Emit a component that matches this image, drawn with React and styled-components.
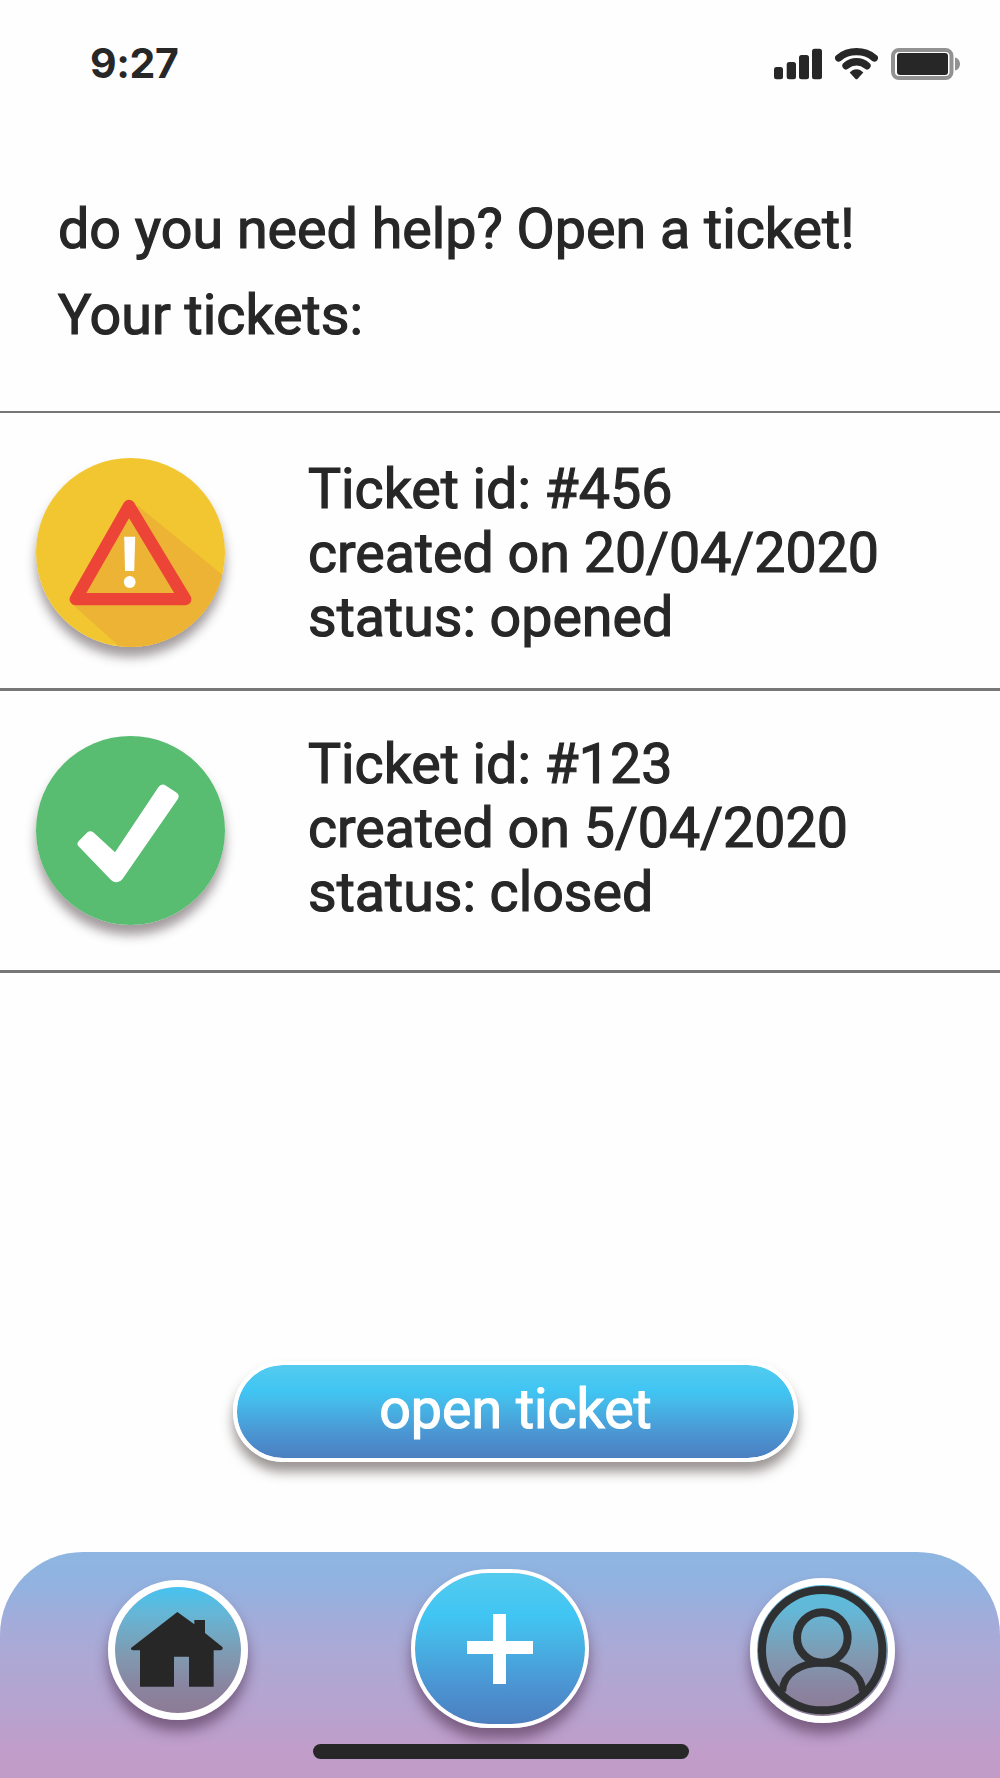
import React from "react";
import styled, { createGlobalStyle } from "styled-components";

const GlobalStyle = createGlobalStyle`
  *, *::before, *::after { box-sizing: border-box; }
  body { margin: 0; background: #fefefe; }
`;

const INK = "#272727";

const Screen = styled.div`
  width: 1000px;
  height: 1778px;
  display: flex;
  flex-direction: column;
  overflow: hidden;
  background: #fefefe;
  color: ${INK};
  font-family: Roboto, "Liberation Sans", sans-serif;
`;

const StatusBar = styled.header`
  height: 128px;
  padding: 0 40px 0 90px;
  display: flex;
  align-items: center;
  justify-content: space-between;
`;

const Clock = styled.time`
  margin-bottom: 2px;
  font-family: Inter, "Liberation Sans", sans-serif;
  font-size: 41px;
  font-weight: 700;
  line-height: 50px;
  letter-spacing: -0.4px;
`;

const StatusIcons = styled.div`
  display: flex;
  align-items: center;
  gap: 13px;
`;

const Glyph = styled.svg`
  display: block;
  flex: none;
  width: ${(p) => p.$w}px;
  height: ${(p) => p.$h}px;
`;

const Intro = styled.section`
  height: 283px;
  padding: 58px 0 0 58px;
`;

const IntroLine = styled.p`
  margin: 0;
  font-size: 55.6px;
  line-height: 86px;
  white-space: nowrap;
  -webkit-text-stroke: 1.2px currentColor;
`;

const TicketList = styled.ul`
  margin: 0;
  padding: 0;
  list-style: none;
  border-top: 2px solid #777;
`;

const TicketRow = styled.li`
  height: ${(p) => p.$height}px;
  padding: 45px 0 0 36px;
  display: flex;
  align-items: flex-start;
  gap: 83px;
  border-bottom: 3px solid #777;
`;

const Badge = styled.div`
  flex: none;
  width: 189px;
  height: 189px;
  border-radius: 50%;
  overflow: hidden;
  box-shadow: 0 10px 11px rgba(50, 35, 40, 0.45);
`;

const TicketText = styled.div`
  margin-top: ${(p) => p.$shift}px;
  font-size: 55.5px;
  line-height: 64px;
  white-space: nowrap;
  -webkit-text-stroke: 1.2px currentColor;
`;

const Actions = styled.div`
  flex: 1;
  padding: 388px 0 0 233px;
`;

const blueFill = `linear-gradient(#54cbef 0%, #40c5f3 28%, #46b8e8 42%, #4b94d2 75%, #4c7fc0 100%)`;

const OpenButton = styled.button`
  display: flex;
  justify-content: center;
  width: 565px;
  height: 101px;
  padding: 12px 0 0;
  border: 4px solid #fff;
  border-radius: 50px;
  background: ${blueFill} padding-box;
  box-shadow: 0 10px 12px rgba(60, 50, 45, 0.5);
  color: #fff;
  font: 400 55.5px/66px Roboto, "Liberation Sans", sans-serif;
  -webkit-text-stroke: 1.2px currentColor;
`;

const TabBar = styled.nav`
  flex: none;
  height: 226px;
  display: flex;
  flex-direction: column;
  align-items: center;
  border-radius: 83px 83px 0 0;
  background: linear-gradient(#8eb6e1 0%, #92b2e0 15%, #a2acda 30%, #aea8d4 48%, #b6a3cf 68%, #c19dca 88%, #c29cc9 100%);
`;

const Tabs = styled.div`
  width: 100%;
  height: 192px;
  padding: 0 105px 0 108px;
  display: flex;
  align-items: flex-start;
  justify-content: space-between;
`;

const RoundTab = styled.button`
  width: ${(p) => p.$size}px;
  height: ${(p) => p.$size}px;
  margin-top: ${(p) => p.$top}px;
  padding: 0;
  border: 7px solid #fff;
  border-radius: 50%;
  background: linear-gradient(${(p) => p.$from} 0%, #64b7d7 20%, #8099b0 55%, #8a84a0 80%, #8d7b95 100%) padding-box;
  box-shadow: 0 11px 13px rgba(60, 25, 55, 0.5);
`;

const AddTab = styled.button`
  width: 178px;
  height: 159px;
  margin: 17px 0 0 2px;
  padding: 0;
  display: grid;
  place-items: center;
  border: 4px solid #fff;
  border-radius: 78px / 80px;
  background: ${blueFill} padding-box;
  box-shadow: 0 11px 13px rgba(60, 25, 55, 0.5);
`;

const HomeIndicator = styled.div`
  width: 376px;
  height: 15px;
  margin-left: 2px;
  border-radius: 8px;
  background: ${INK};
`;

const SignalIcon = () => (
  <Glyph $w={49} $h={32} viewBox="0 0 49 32" fill={INK}>
    <rect x="1" y="19" width="9" height="12.3" rx="2.5" />
    <rect x="13.7" y="14" width="9.3" height="17.3" rx="2.5" />
    <rect x="26" y="7" width="10" height="24.3" rx="2.5" />
    <rect x="39" y="0.7" width="10" height="30.6" rx="2.5" />
  </Glyph>
);

const WifiIcon = () => (
  <Glyph $w={43} $h={32} viewBox="0 0 43 32" fill="none" stroke={INK} strokeLinecap="round">
    <path d="M3.700 10C13.500 1.600 29.500 1.600 39.300 10" strokeWidth="7.300" />
    <path d="M11 17.800C17 12.400 26 12.400 32 17.800" strokeWidth="7.300" />
    <path
      d="M14.700 24.500C18.500 20 24.500 20 28.300 24.500L22.700 30.700Q21.500 31.800 20.300 30.700Z"
      fill={INK}
      stroke="none"
    />
  </Glyph>
);

const BatteryIcon = () => (
  <Glyph $w={69} $h={32} viewBox="0 0 69 32">
    <rect x="2" y="2" width="58.500" height="28" rx="6" fill="none" stroke="#929292" strokeWidth="4" />
    <rect x="6" y="5" width="51" height="22" rx="3" fill={INK} />
    <path d="M64 9.500C67 10 69 13 69 16S67 22 64 22.500Z" fill="#929292" />
  </Glyph>
);

const WarningIcon = () => (
  <Glyph $w={189} $h={189} viewBox="0 0 189 189">
    <rect width="189" height="189" fill="#f2c630" />
    <path d="M102 48L189 119V189H109L84 189L36 146Z" fill="#edb334" />
    <path d="M93 48L39.700 141.200H149.200Z" fill="none" stroke="#ec4436" strokeWidth="12.300" strokeLinejoin="round" />
    <path d="M88.200 78.700H99.200L98.200 113H89Z" fill="#fff" />
    <circle cx="93.700" cy="124" r="5.900" fill="#fff" />
  </Glyph>
);

const CheckIcon = () => (
  <Glyph $w={189} $h={189} viewBox="0 0 189 189">
    <rect width="189" height="189" fill="#58bc71" />
    <path
      d="M42.800 110.500Q40 107.700 42.800 104.900L51.200 96.600Q54.300 93.700 57.500 96.600L79 116.300L122.500 51Q125.500 46.700 130 49.700L140 56.300Q144.500 59.300 141.500 63.600L86.500 143Q84 146.500 80.500 146.300Q77.500 146.300 75 144Z"
      fill="#fff"
    />
  </Glyph>
);

const HomeIcon = () => (
  <Glyph $w={126} $h={126} viewBox="345 171 378 378" fill={INK}>
    <path d="M532 246L583 283V270H615V309L667 351Q671 358 662 361H641V470H567V380H522V470H420V361H400Q391 360 393 354Z" />
  </Glyph>
);

const ProfileIcon = () => (
  <Glyph $w={131} $h={131} viewBox="171 164.500 393 393" fill="none" stroke="#2f3031" strokeWidth="24">
    <circle cx="366.500" cy="360" r="180.500" />
    <circle cx="367" cy="322" r="76" />
    <path d="M247 484C249 430 300 398 367 398S486 430 488 484" strokeWidth="22" />
  </Glyph>
);

const PlusIcon = () => (
  <Glyph $w={66} $h={70} viewBox="0 0 66 70">
    <path d="M26 0H39V27H66V40H39V70H26V40H0V27H26Z" fill="#fff" />
  </Glyph>
);

const tickets = [
  { id: "#456", date: "20/04/2020", status: "opened", Icon: WarningIcon, height: 278, shift: 0 },
  { id: "#123", date: "5/04/2020", status: "closed", Icon: CheckIcon, height: 282, shift: -3 },
];

export default function App() {
  return (
    <Screen>
      <GlobalStyle />
      <StatusBar>
        <Clock>9:27</Clock>
        <StatusIcons>
          <SignalIcon />
          <WifiIcon />
          <BatteryIcon />
        </StatusIcons>
      </StatusBar>

      <Intro>
        <IntroLine>do you need help? Open a ticket!</IntroLine>
        <IntroLine>Your tickets:</IntroLine>
      </Intro>

      <TicketList>
        {tickets.map(({ id, date, status, Icon, height, shift }) => (
          <TicketRow key={id} $height={height}>
            <Badge>
              <Icon />
            </Badge>
            <TicketText $shift={shift}>
              <div>Ticket id: {id}</div>
              <div>created on {date}</div>
              <div>status: {status}</div>
            </TicketText>
          </TicketRow>
        ))}
      </TicketList>

      <Actions>
        <OpenButton type="button">open ticket</OpenButton>
      </Actions>

      <TabBar>
        <Tabs>
          <RoundTab type="button" aria-label="Home" $size={140} $top={28} $from="#45c3f0">
            <HomeIcon />
          </RoundTab>
          <AddTab type="button" aria-label="Add">
            <PlusIcon />
          </AddTab>
          <RoundTab type="button" aria-label="Profile" $size={145} $top={26} $from="#58c0dc">
            <ProfileIcon />
          </RoundTab>
        </Tabs>
        <HomeIndicator />
      </TabBar>
    </Screen>
  );
}
